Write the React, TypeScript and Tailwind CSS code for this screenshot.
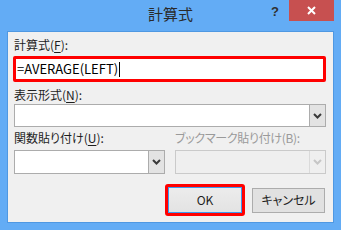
import React from "react";

const font = "font-['Noto_Sans_CJK_JP','Noto_Sans',sans-serif] [font-feature-settings:'palt']";

function Chevron({ disabled }: { disabled?: boolean }) {
  return (
    <svg width="9" height="6" viewBox="0 0 9 6">
      <path
        d="M1 1 L4.5 4.5 L8 1"
        fill="none"
        stroke={disabled ? "#c6c6c6" : "#3a3a3a"}
        strokeWidth="2"
      />
    </svg>
  );
}

function Select({ disabled, className }: { disabled?: boolean; className: string }) {
  return (
    <div
      className={`flex border ${
        disabled ? "border-[#cacaca] bg-[#efefef]" : "border-[#acacac] bg-white"
      } ${className}`}
    >
      <div className="flex-1" />
      <div
        className={`w-[16px] flex items-center justify-center border-l ${
          disabled ? "border-[#dadada] bg-[#efefef]" : "border-[#acacac] bg-[#e3e3e3]"
        }`}
      >
        <Chevron disabled={disabled} />
      </div>
    </div>
  );
}

export default function App() {
  return (
    <div className={`w-[341px] h-[230px] bg-[#63acf5] flex flex-col ${font}`}>
      <div className="h-[31px] grid grid-cols-[1fr_auto_1fr]">
        <div />
        <div className="text-[15px] leading-[20px] text-[#2a2a2a] pt-[4px]">計算式</div>
        <div className="flex justify-end items-start pr-[7px]">
          <div className="text-[13px] font-bold leading-[14px] text-[#303030] mt-[5px] mr-[10px] font-['Liberation_Sans',sans-serif]">
            ?
          </div>
          <div className="w-[45px] h-[21px] bg-[#c75050] flex items-center justify-center">
            <svg width="9" height="9" viewBox="0 0 9 9">
              <path d="M1 1 L8 8 M8 1 L1 8" stroke="white" strokeWidth="2" />
            </svg>
          </div>
        </div>
      </div>
      <div className="mx-[7px] h-[192px] border border-[#4f98e2] bg-[#f0f0f0] flex flex-col pl-[6px] pt-[5px] text-[12px] leading-[16px] text-[#1e1e1e]">
        <div>
          計算式(<span className="underline underline-offset-2">F</span>):
        </div>
        <div className="mt-[3px] -ml-[1px] w-[313px] h-[26px] border-[3px] border-[#ff0000] rounded-[2px] bg-white flex items-center pl-[1px]">
          <span className="text-[13px] leading-[18px] text-black">=AVERAGE(LEFT)</span>
          <span className="w-px h-[15px] bg-black ml-[1px]" />
        </div>
        <div className="mt-[5px]">
          表示形式(<span className="underline underline-offset-2">N</span>):
        </div>
        <Select className="mt-[1px] w-[312px] h-[23px]" />
        <div className="mt-[3px] flex">
          <div className="w-[161px]">
            関数貼り付け(<span className="underline underline-offset-2">U</span>):
          </div>
          <div className="text-[#9a9a9a] tracking-[-0.3px]">ブックマーク貼り付け(B):</div>
        </div>
        <div className="mt-[4px] flex gap-[10px]">
          <Select className="w-[151px] h-[24px]" />
          <Select disabled className="w-[151px] h-[24px]" />
        </div>
        <div className="mt-[10px] flex items-center justify-end pr-[8px] gap-[7px]">
          <div className="border-[3px] border-[#ff0000] rounded-[3px]">
            <div className="w-[74px] h-[26px] border border-[#3c9af0] bg-[linear-gradient(#ececec,#e3e3e3)] flex items-center justify-center text-[12px]">
              OK
            </div>
          </div>
          <div className="w-[73px] h-[25px] border border-[#acacac] bg-[#e1e1e1] flex items-center justify-center text-[12px]">
            キャンセル
          </div>
        </div>
      </div>
    </div>
  );
}
